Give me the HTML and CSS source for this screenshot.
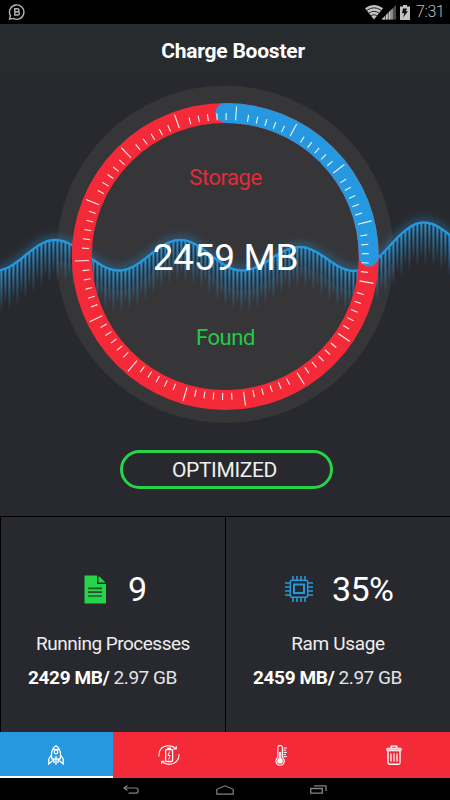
FILE: index.html
```html
<!DOCTYPE html>
<html lang="en">
<head>
    <meta charset="UTF-8">
    <meta name="viewport" content="width=device-width, initial-scale=1.0">
    <title>Charge Booster</title>
    <link rel="stylesheet" href="styles.css">
</head>
<body>
    <div class="phone">
        <div class="status-bar">
            <svg class="chat-icon" width="18" height="18" viewBox="0 0 18 18" fill="none" stroke="#b4b4b4">
                <path d="M1.6 16.2 2.4 12.6A7.2 7.2 0 1 1 5.2 15.4Z" stroke-width="1.4"/>
                <path d="M6.8 5.8h2.7a1.5 1.5 0 0 1 0 3H6.8zM6.8 8.8h3a1.6 1.6 0 0 1 0 3.2h-3z" stroke-width="1.4"/>
            </svg>
            <div class="status-right">
                <svg width="31" height="15" viewBox="0 0 31 15">
                    <path d="M0 3.2Q9 -3 18 3.2L9 14.5Z" fill="#c4c4c4"/>
                    <path d="M1.8 5.3Q9 .3 16.2 5.3M4 8Q9 4.6 14 8M6.1 10.6Q9 8.6 11.9 10.6" fill="none" stroke="#111" stroke-width=".9"/>
                    <path d="M16.5 14.5 31 0V14.5Z" fill="#4c4c4c"/>
                    <path d="M16.5 14.5 27.5 3.5V14.5Z" fill="#c4c4c4"/>
                    <path d="M20.5 9v6M23.3 6v9M26 4v11" stroke="#111" stroke-width=".6"/>
                </svg>
                <svg class="battery" width="10" height="15" viewBox="0 0 10 15">
                    <path d="M0 1.5H3V0H7V1.5H10V15H0Z" fill="#c4c4c4"/>
                    <path d="M3 3.5H7L5.8 6.3H8L3 12.5 4.3 8.2H2Z" fill="#111"/>
                </svg>
                <span class="clock">7:31</span>
            </div>
        </div>

        <header class="header">
            <h1>Charge Booster</h1>
        </header>

        <main class="hero">
            <svg class="gauge" width="450" height="440" viewBox="0 76 450 440">
                <defs>
                    <linearGradient id="barFade" x1="0" y1="0" x2="0" y2="1">
                        <stop offset="0" stop-color="#2598df"/>
                        <stop offset=".45" stop-color="#2598df" stop-opacity=".55"/>
                        <stop offset="1" stop-color="#2598df" stop-opacity="0"/>
                    </linearGradient>
                    <filter id="glow" x="-10%" y="-100%" width="120%" height="300%">
                        <feGaussianBlur stdDeviation="5"/>
                    </filter>
                </defs>
                <circle cx="225" cy="254.3" r="168.7" fill="#363538"/>
                <path class="wave wave-glow" filter="url(#glow)"/>
                <path id="waveShade" fill="#28292e" fill-opacity=".6"/>
                <g id="bars" fill="url(#barFade)"></g>
                <path class="wave"/>
                <circle class="ring" cx="225.3" cy="256.5" r="143.5"/>
                <path class="progress" d="M225.3 113A143.5 143.5 0 0 1 368.8 256.5"/>
                <g id="ticks" stroke="#fff" stroke-opacity=".9" stroke-width="1.1"></g>
            </svg>
            <div class="readout">
                <p class="storage">Storage</p>
                <p class="amount">2459 MB</p>
                <p class="found">Found</p>
            </div>
            <button class="optimize-btn">OPTIMIZED</button>
        </main>

        <section class="stats">
            <div class="stat">
                <div class="stat-top">
                    <svg width="23" height="29" viewBox="0 0 23 29">
                        <path d="M.5.5H13V9H22V28.5H.5Z" fill="#27d34b"/>
                        <path d="M14.5.8 21.5 7.5H14.5Z" fill="#27d34b"/>
                        <path d="M4 13.4H18M4 17.2H18M4 21H18" stroke="#20542f" stroke-width="1.7"/>
                    </svg>
                    <span class="count">9</span>
                </div>
                <p class="stat-label">Running Processes</p>
                <p class="stat-detail"><b>2429 MB/</b> 2.97 GB</p>
            </div>
            <div class="stat ram">
                <div class="stat-top">
                    <svg width="28" height="28" viewBox="0 0 28 28" fill="none" stroke="#2598df" stroke-width="1.6">
                        <rect x="5.3" y="5.3" width="17.4" height="17" rx="2" stroke-width="1.5"/>
                        <rect x="9" y="9.5" width="10" height="8.5" stroke-width="2"/>
                        <path d="M8 1V5M12 1V5M16 1V5M20 1V5M8 23V27M12 23V27M16 23V27M20 23V27M0 8H5M0 12H5M0 16H5M0 20H5M23 8H28M23 12H28M23 16H28M23 20H28"/>
                    </svg>
                    <span class="count">35%</span>
                </div>
                <p class="stat-label">Ram Usage</p>
                <p class="stat-detail"><b>2459 MB/</b> 2.97 GB</p>
            </div>
        </section>

        <nav class="tabs">
            <a class="tab active">
                <svg width="16" height="20" viewBox="0 0 16 20" fill="none" stroke="#fff" stroke-width="1.3">
                    <path d="M4 14C2.6 8 4 3.5 8 .8C12 3.5 13.4 8 12 14ZM5 4.3H11M3.5 10 .8 14V19L4.8 15.5M12.5 10 15.2 14V19L11.2 15.5M8 11V20M5.5 14.5 6.3 18M10.5 14.5 9.7 18"/>
                    <circle cx="8" cy="7" r="1.8"/>
                </svg>
            </a>
            <a class="tab">
                <svg width="22" height="20" viewBox="0 0 22 20" fill="none" stroke="#fff">
                    <path d="M1 11.5C.3 5 4.5.8 10 .8C13.5.8 16 1.8 18 3.6M18.3 1V4H15.3M21 9C21.5 15 17 19.3 12 19.3C8.5 19.3 6 18.4 4 16.4M3.7 19V16.2H6.7" stroke-width="1.1"/>
                    <rect x="7.6" y="4.5" width="7" height="12" rx="1.2" stroke-width="1.3"/>
                    <path d="M9.3 3.2H12.9" stroke-width="1.4"/>
                    <path d="M11.6 6.5 9.9 10.5H12.2L10.7 14.5" stroke-width=".9"/>
                </svg>
            </a>
            <a class="tab">
                <svg width="13" height="21" viewBox="0 0 13 21" fill="none" stroke="#fff">
                    <path d="M2.8 12.5V2.8A2.3 2.3 0 0 1 7.4 2.8V12.5A4.2 4.2 0 1 1 2.8 12.5Z" stroke-width="1.1"/>
                    <circle cx="5" cy="16" r="2.8" fill="#fff" stroke="none"/>
                    <path d="M5.1 7V15" stroke-width="2.4" stroke-opacity=".85"/>
                    <path d="M8.5 3H12M8.5 5.2H11M8.5 7.4H12M8.5 9.6H11M8.5 11.6H12" stroke-width="1"/>
                </svg>
            </a>
            <a class="tab">
                <svg width="16" height="20" viewBox="0 0 16 20" fill="none" stroke="#fff">
                    <path d="M5.2 3V1.2H10.8V3" stroke-width="1.3"/>
                    <rect x=".6" y="3.2" width="14.8" height="2.6" rx="1" fill="#fbb" stroke-width=".9"/>
                    <path d="M2 6V17.5Q2 19.2 3.6 19.2H12.4Q14 19.2 14 17.5V6" stroke-width="1.4"/>
                    <path d="M5 8.5V16.5M8 8.5V16.5M11 8.5V16.5" stroke-width="1.3"/>
                </svg>
            </a>
        </nav>

        <div class="nav-bar">
            <svg width="16" height="9" viewBox="0 0 16 9" fill="none" stroke="#828282" stroke-width="1.2">
                <path d="M4.5 .5 1 3 4.5 5.5M1 3H13Q15.2 3 15.2 5.6T13 8.2H5.5"/>
            </svg>
            <svg width="18" height="10" viewBox="0 0 18 10" fill="none" stroke="#828282" stroke-width="1.2">
                <path d="M.8 9.2V4.3L9 .8 17.2 4.3V9.2Z"/>
            </svg>
            <svg width="17" height="9" viewBox="0 0 17 9" fill="none" stroke="#828282" stroke-width="1.3">
                <path d="M.7 3.5H12.3V8.2H.7ZM4 .8H16V6"/>
            </svg>
        </div>
    </div>

    <script src="script.js"></script>
</body>
</html>
```

FILE: styles.css
```css
* {
    margin: 0;
    padding: 0;
    box-sizing: border-box;
    font-family: Roboto, 'Liberation Sans', sans-serif;
}

body {
    background-color: #28292e;
    color: #fff;
}

.phone {
    width: 450px;
    height: 800px;
    display: flex;
    flex-direction: column;
    overflow: hidden;
}

.status-bar {
    height: 24px;
    padding: 0 7px 0 8px;
    background-color: #000;
    display: flex;
    align-items: center;
    justify-content: space-between;
}

.status-right {
    display: flex;
    align-items: center;
}

.battery {
    margin-left: 4px;
}

.clock {
    margin-left: 6px;
    font-size: 16px;
    line-height: 24px;
    color: #bcbcbc;
    font-weight: 300;
    letter-spacing: -0.4px;
    width: 27px;
}

.header {
    height: 52px;
    padding: 0 0 0 16px;
    background-color: #272b2e;
    text-align: center;
}

h1 {
    font-size: 21px;
    line-height: 54px;
    font-weight: bold;
    letter-spacing: -0.22px;
    white-space: nowrap;
}

.hero {
    position: relative;
    height: 440px;
    text-align: center;
}

/* gauge sits behind the readout text */
.gauge {
    position: absolute;
    left: 0;
    top: 0;
}

.wave {
    fill: none;
    stroke: #2598df;
    stroke-width: 2.4;
}

.wave-glow {
    stroke-width: 7;
    stroke-opacity: 0.45;
}

.ring {
    fill: none;
    stroke: #f42a39;
    stroke-width: 20;
}

.progress {
    fill: none;
    stroke: #2598df;
    stroke-width: 20;
    stroke-linecap: round;
}

.readout {
    position: relative;
    padding: 82px 0 0 1px;
    height: 374px;
}

.storage,
.found {
    font-size: 22px;
    line-height: 40px;
    letter-spacing: -0.45px;
    color: #e02c3c;
}

.amount {
    font-size: 37px;
    line-height: 120px;
    letter-spacing: -0.3px;
}

.found {
    color: #21ca46;
}

.optimize-btn {
    position: relative;
    display: block;
    margin: 0 auto;
    left: 1px;
    width: 213px;
    height: 39px;
    border: 3px solid #27d34b;
    border-radius: 20px;
    background: none;
    color: #f0f0f0;
    font-size: 21px;
    letter-spacing: -0.35px;
    padding-right: 3px;
}

.stats {
    display: flex;
    height: 216px;
    border-top: 1px solid #000;
}

.stat {
    width: 225px;
    padding-top: 51px;
    border-left: 1px solid #000;
}

.stat-top {
    display: flex;
    align-items: center;
    height: 42px;
    padding-left: 83px;
}

.count {
    margin-left: 21px;
    font-size: 34px;
    line-height: 42px;
    letter-spacing: -0.6px;
}

.ram .stat-top {
    padding-left: 59px;
}

.ram .count {
    margin-left: 19px;
}

.stat-label {
    margin-top: 22px;
    text-align: center;
    font-size: 19px;
    line-height: 24px;
    letter-spacing: -0.5px;
    color: #eee;
}

.ram .stat-label {
    letter-spacing: -0.35px;
}

.stat-detail {
    margin-top: 10px;
    padding-left: 27px;
    font-size: 19px;
    line-height: 24px;
    letter-spacing: -0.45px;
    color: #e4e4e4;
    white-space: nowrap;
}

.stat-detail b {
    letter-spacing: -0.35px;
    color: #fff;
}

.tabs {
    display: flex;
    height: 46px;
    background-color: #f42a39;
}

.tab {
    flex: 1;
    display: flex;
    align-items: center;
    justify-content: center;
    padding-top: 2px;
    border-bottom: 2px solid transparent;
}

.tab.active {
    background-color: #2598df;
    border-bottom-color: #fff;
}

.nav-bar {
    height: 22px;
    padding: 1px 123px 0;
    background-color: #000;
    display: flex;
    align-items: center;
    justify-content: space-between;
}
```

FILE: script.js
```javascript
const SVG_NS = 'http://www.w3.org/2000/svg';

function addShape(parent, name, attrs) {
    const el = document.createElementNS(SVG_NS, name);
    for (const key in attrs) {
        el.setAttribute(key, attrs[key]);
    }
    parent.appendChild(el);
}

// crests and troughs of the wave
const points = [[-4, 270.5], [55, 240], [119, 270.5], [180, 240], [242, 270.5], [300, 247], [354, 270.8], [424, 222.5], [482, 253]];

function waveY(x) {
    let i = 0;
    while (x > points[i + 1][0]) i++;
    const [x1, y1] = points[i];
    const [x2, y2] = points[i + 1];
    const t = (x - x1) / (x2 - x1);
    return y1 + (y2 - y1) * (1 - Math.cos(Math.PI * t)) / 2;
}

let wave = '';
for (let x = -2; x <= 452; x += 2) {
    wave += (wave ? 'L' : 'M') + x + ' ' + waveY(x).toFixed(1);
}
document.querySelectorAll('.wave').forEach(path => path.setAttribute('d', wave));

// cuts the glow off under the line
let shade = wave;
for (let x = 452; x >= -2; x -= 2) {
    shade += 'L' + x + ' ' + (waveY(x) + 20).toFixed(1);
}
document.getElementById('waveShade').setAttribute('d', shade + 'Z');

const bars = document.getElementById('bars');
for (let i = 0; i < 113; i++) {
    const x = i * 4 + 0.4;
    addShape(bars, 'rect', { x: x, y: waveY(x), width: 2, height: i % 2 ? 34 : 42 });
}

// one long tick every 24 degrees, five short ones after it
const ticks = document.getElementById('ticks');
for (let i = 0; i < 15; i++) {
    const start = 4.3 + i * 24;
    for (let j = 0; j < 6; j++) {
        const angle = j === 0 ? start : start + 1.3 + j * 3.75;
        addShape(ticks, 'line', {
            x1: 225.3,
            x2: 225.3,
            y1: 256.5 - 136.5,
            y2: 256.5 - (j === 0 ? 150.5 : 143.5),
            transform: `rotate(${angle} 225.3 256.5)`
        });
    }
}
```
